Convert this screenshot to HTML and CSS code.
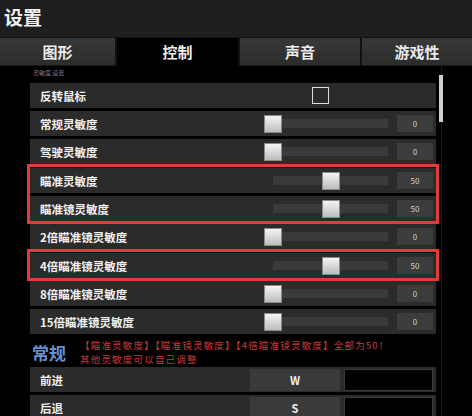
FILE: index.html
```html
<!DOCTYPE html>
<html lang="zh">
  <head>
    <meta charset="UTF-8">
    <title>设置</title>
    <link rel="stylesheet" href="styles.css">
  </head>
  <body>
    <div id="app">
      <div class="header">设置</div>
      <div class="tabs">
        <div class="tab">图形</div>
        <div class="tab active">控制</div>
        <div class="tab">声音</div>
        <div class="tab">游戏性</div>
      </div>

      <div class="content">
        <div class="crumb">灵敏度 设置</div>

        <div class="row">
          <div class="label">反转鼠标</div>
          <div class="check"></div>
        </div>
        <div class="row">
          <div class="label">常规灵敏度</div>
          <div class="slider"><div class="track"></div><div class="thumb" style="left: 0px"></div></div>
          <div class="value">0</div>
        </div>
        <div class="row">
          <div class="label">驾驶灵敏度</div>
          <div class="slider"><div class="track"></div><div class="thumb" style="left: 0px"></div></div>
          <div class="value">0</div>
        </div>

        <div class="mark">
          <div class="row">
            <div class="label">瞄准灵敏度</div>
            <div class="slider"><div class="track"></div><div class="thumb" style="left: 58px"></div></div>
            <div class="value">50</div>
          </div>
          <div class="row">
            <div class="label">瞄准镜灵敏度</div>
            <div class="slider"><div class="track"></div><div class="thumb" style="left: 58px"></div></div>
            <div class="value">50</div>
          </div>
        </div>

        <div class="row">
          <div class="label">2倍瞄准镜灵敏度</div>
          <div class="slider"><div class="track"></div><div class="thumb" style="left: 0px"></div></div>
          <div class="value">0</div>
        </div>

        <div class="mark">
          <div class="row">
            <div class="label">4倍瞄准镜灵敏度</div>
            <div class="slider"><div class="track"></div><div class="thumb" style="left: 58px"></div></div>
            <div class="value">50</div>
          </div>
        </div>

        <div class="row">
          <div class="label">8倍瞄准镜灵敏度</div>
          <div class="slider"><div class="track"></div><div class="thumb" style="left: 0px"></div></div>
          <div class="value">0</div>
        </div>
        <div class="row">
          <div class="label">15倍瞄准镜灵敏度</div>
          <div class="slider"><div class="track"></div><div class="thumb" style="left: 0px"></div></div>
          <div class="value">0</div>
        </div>

        <div class="section">
          <div class="section_title">常规</div>
          <div class="note">
            <div>【瞄准灵敏度】【瞄准镜灵敏度】【4倍瞄准镜灵敏度】全部为50！</div>
            <div>其他灵敏度可以自己调整</div>
          </div>
        </div>

        <div class="row">
          <div class="label">前进</div>
          <div class="key">W</div>
          <div class="key empty"></div>
        </div>
        <div class="row">
          <div class="label">后退</div>
          <div class="key">S</div>
          <div class="key empty"></div>
        </div>

        <div class="scroll_line"></div>
        <div class="scroll_bar"></div>
      </div>
    </div>
  </body>
</html>
```

FILE: styles.css
```css
body {
  margin: 0;
  background-color: #000;
  font-family: "Noto Sans CJK SC", "Noto Sans", sans-serif;
  color: #eee;
}
#app {
  width: 472px;
  height: 416px;
  overflow: hidden;
  background-color: #000;
}
.header {
  height: 37px;
  background-color: #1e1e1e;
  border-bottom: 1px solid #141414;

  padding-left: 4px;
  font-size: 19px;
  font-weight: 700;
  line-height: 34px;
  color: #f2f2f2;
}
.tabs {
  height: 28px;
  display: grid;
  grid-template-columns: 115px 121px 120px 1fr;
  column-gap: 2px;
  background-color: #111;
}
.tab {
  background: linear-gradient(#383838, #2c2c2c);
  border-bottom: 1px solid #151515;

  text-align: center;
  font-size: 15px;
  font-weight: 700;
  line-height: 27px;
  color: #ececec;
}
.tab.active {
  background: #000;
  border-bottom: none;
}
.content {
  position: relative;
  height: 350px;
  padding: 4px 0 0 30px;
}
.crumb {
  height: 13px;
  padding-left: 3px;
  font-size: 6px;
  line-height: 6px;
  color: #7c7c90;
}
.row {
  width: 406px;
  height: 25px;
  margin-bottom: 3px;

  display: flex;
  flex-direction: row;
  align-items: center;

  background-color: #2b2b2b;
  box-sizing: border-box;
  padding-left: 10px;
  padding-right: 3px;
}
.label {
  flex: 1;
  font-size: 11.5px;
  font-weight: 700;
  color: #f0f0f0;
}
.check {
  width: 15px;
  height: 15px;
  border: 1.5px solid #ddd;
  margin-right: 104px;
}
.slider {
  position: relative;
  width: 124px;
  height: 17px;
  margin-right: 9px;
}
.track {
  margin-left: 9px;
  margin-top: 4px;
  width: 115px;
  height: 9px;
  background-color: #3a3a3a;
}
.thumb {
  position: absolute;
  top: 0;
  width: 16px;
  height: 16px;
  border: 1px solid #8a8a8a;
  background: linear-gradient(#f4f4f4, #bdbdbd);
}
.value {
  width: 36px;
  height: 17px;
  background-color: #3c3c3c;

  text-align: center;
  font-size: 8px;
  line-height: 17px;
  color: #cfcfcf;
}
.mark {
  outline: 3px solid #e23b3b;
  outline-offset: 0px;
  width: 406px;
  margin-bottom: 3px;
  padding-top: 1px;
}
.mark .row:last-child {
  margin-bottom: 1px;
}
.section {
  height: 30px;
  display: flex;
  flex-direction: row;
  align-items: center;
  padding-left: 2px;
}
.section_title {
  width: 48px;
  font-size: 17px;
  font-weight: 700;
  color: #6b90d2;
}
.note {
  font-size: 9.5px;
  line-height: 14px;
  color: #cc3838;
  letter-spacing: 1.2px;
}
.key {
  width: 90px;
  height: 22px;
  margin-left: 4px;
  background-color: #3a3a3a;

  text-align: center;
  font-size: 11px;
  font-weight: 700;
  line-height: 22px;
  color: #eee;
}
.key.empty {
  box-sizing: border-box;
  width: 89px;
  background-color: #000;
  border: 1px solid #3a3a3a;
}
.scroll_line {
  position: absolute;
  top: 0;
  left: 441px;
  width: 1px;
  height: 100%;
  background-color: #1a1a1a;
}
.scroll_bar {
  position: absolute;
  top: 9px;
  left: 439px;
  width: 4px;
  height: 47px;
  background-color: #cfcfcf;
}
```
